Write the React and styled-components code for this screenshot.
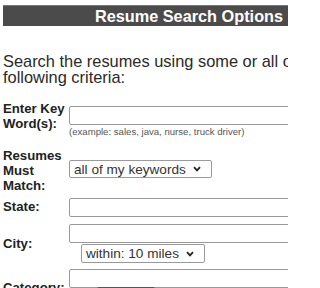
import React from "react"
import styled, { createGlobalStyle } from "styled-components"

const GlobalStyle = createGlobalStyle`
  html, body {
    margin: 0;
    padding: 0;
    background: #fff;
    overflow: hidden;
  }
  body {
    font-family: "Liberation Sans", Arial, sans-serif;
    color: #222;
  }
`

const Viewport = styled.div`
  width: 288px;
  height: 288px;
  overflow: hidden;
`

const Page = styled.div`
  width: 420px;
  padding: 5px 0 0 3px;
`

const Header = styled.div`
  width: 372px;
  height: 21px;
  background: #4b4b4b;
  color: #fff;
  font-weight: bold;
  font-size: 16.3px;
  line-height: 21px;
  text-align: center;
  border-top: 1px solid #777;
  box-sizing: border-box;
`

const Intro = styled.p`
  margin: 28px 0 0;
  width: 400px;
  font-size: 16.4px;
  line-height: 15.5px;
  color: #2a2a2a;
`

const Form = styled.div`
  display: flex;
  flex-direction: column;
  margin-top: 16px;
`

const Row = styled.div`
  display: flex;
  align-items: ${(p) => p.$align || "flex-start"};
  margin-top: ${(p) => p.$gap || 0}px;
`

const Label = styled.div`
  width: 66px;
  flex: none;
  font-weight: bold;
  font-size: 13.2px;
  line-height: 15px;
  color: #222;
  margin-top: ${(p) => p.$offset || 0}px;
`

const Field = styled.div`
  display: flex;
  flex-direction: column;
  align-items: flex-start;
  margin-top: ${(p) => p.$offset || 0}px;
`

const TextInput = styled.input`
  width: 262px;
  height: 19px;
  box-sizing: border-box;
  border: 1px solid #9a9a9a;
  border-radius: 2px;
  background: #fff;
  padding: 0 4px;
  margin: 0;
  font-family: inherit;
  font-size: 13px;
`

const Hint = styled.div`
  font-size: 9.6px;
  line-height: 12px;
  color: #555;
  margin-top: 1px;
  white-space: nowrap;
`

const SelectBox = styled.div`
  position: relative;
  display: flex;
  align-items: center;
  width: ${(p) => p.$width}px;
  height: ${(p) => p.$height || 18}px;
  box-sizing: border-box;
  border: 1px solid #9a9a9a;
  border-radius: 2px;
  background: #fff;
  padding-left: 4px;
  margin-left: ${(p) => p.$indent || 0}px;
  margin-top: ${(p) => p.$top || 0}px;
  font-size: 13.6px;
  color: #333;
  white-space: nowrap;

  svg {
    position: absolute;
    right: 10px;
    top: 50%;
    margin-top: -3px;
  }
`

const DarkButton = styled.div`
  width: 58px;
  height: 14px;
  margin: -1px 0 0 28px;
  background: #555;
  border-radius: 2px;
`

const Chevron = () => (
  <svg width="8" height="6" viewBox="0 0 8 6">
    <path d="M1 1.2 L4 4.4 L7 1.2" fill="none" stroke="#222" strokeWidth="1.8" />
  </svg>
)

const Select = ({ children, width, height, indent, top }) => (
  <SelectBox $width={width} $height={height} $indent={indent} $top={top}>
    {children}
    <Chevron />
  </SelectBox>
)

export default function App() {
  return (
    <>
      <GlobalStyle />
      <Viewport>
        <Page>
          <Header>Resume Search Options</Header>
          <Intro>
            Search the resumes using some or all of the
            <br />
            following criteria:
          </Intro>
          <Form>
            <Row>
              <Label>
                Enter Key
                <br />
                Word(s):
              </Label>
              <Field $offset={5}>
                <TextInput />
                <Hint>(example: sales, java, nurse, truck driver)</Hint>
              </Field>
            </Row>
            <Row $gap={10}>
              <Label>
                Resumes
                <br />
                Must
                <br />
                Match:
              </Label>
              <Field $offset={12}>
                <Select width={143}>all of my keywords</Select>
              </Field>
            </Row>
            <Row $gap={5}>
              <Label $offset={1}>State:</Label>
              <Field>
                <TextInput />
              </Field>
            </Row>
            <Row $gap={7} $align="center">
              <Label>City:</Label>
              <Field>
                <TextInput />
                <Select width={124} height={19} indent={12} top={1}>
                  within: 10 miles
                </Select>
              </Field>
            </Row>
            <Row $gap={6}>
              <Label $offset={11}>Category:</Label>
              <Field>
                <TextInput />
                <DarkButton />
              </Field>
            </Row>
          </Form>
        </Page>
      </Viewport>
    </>
  )
}
